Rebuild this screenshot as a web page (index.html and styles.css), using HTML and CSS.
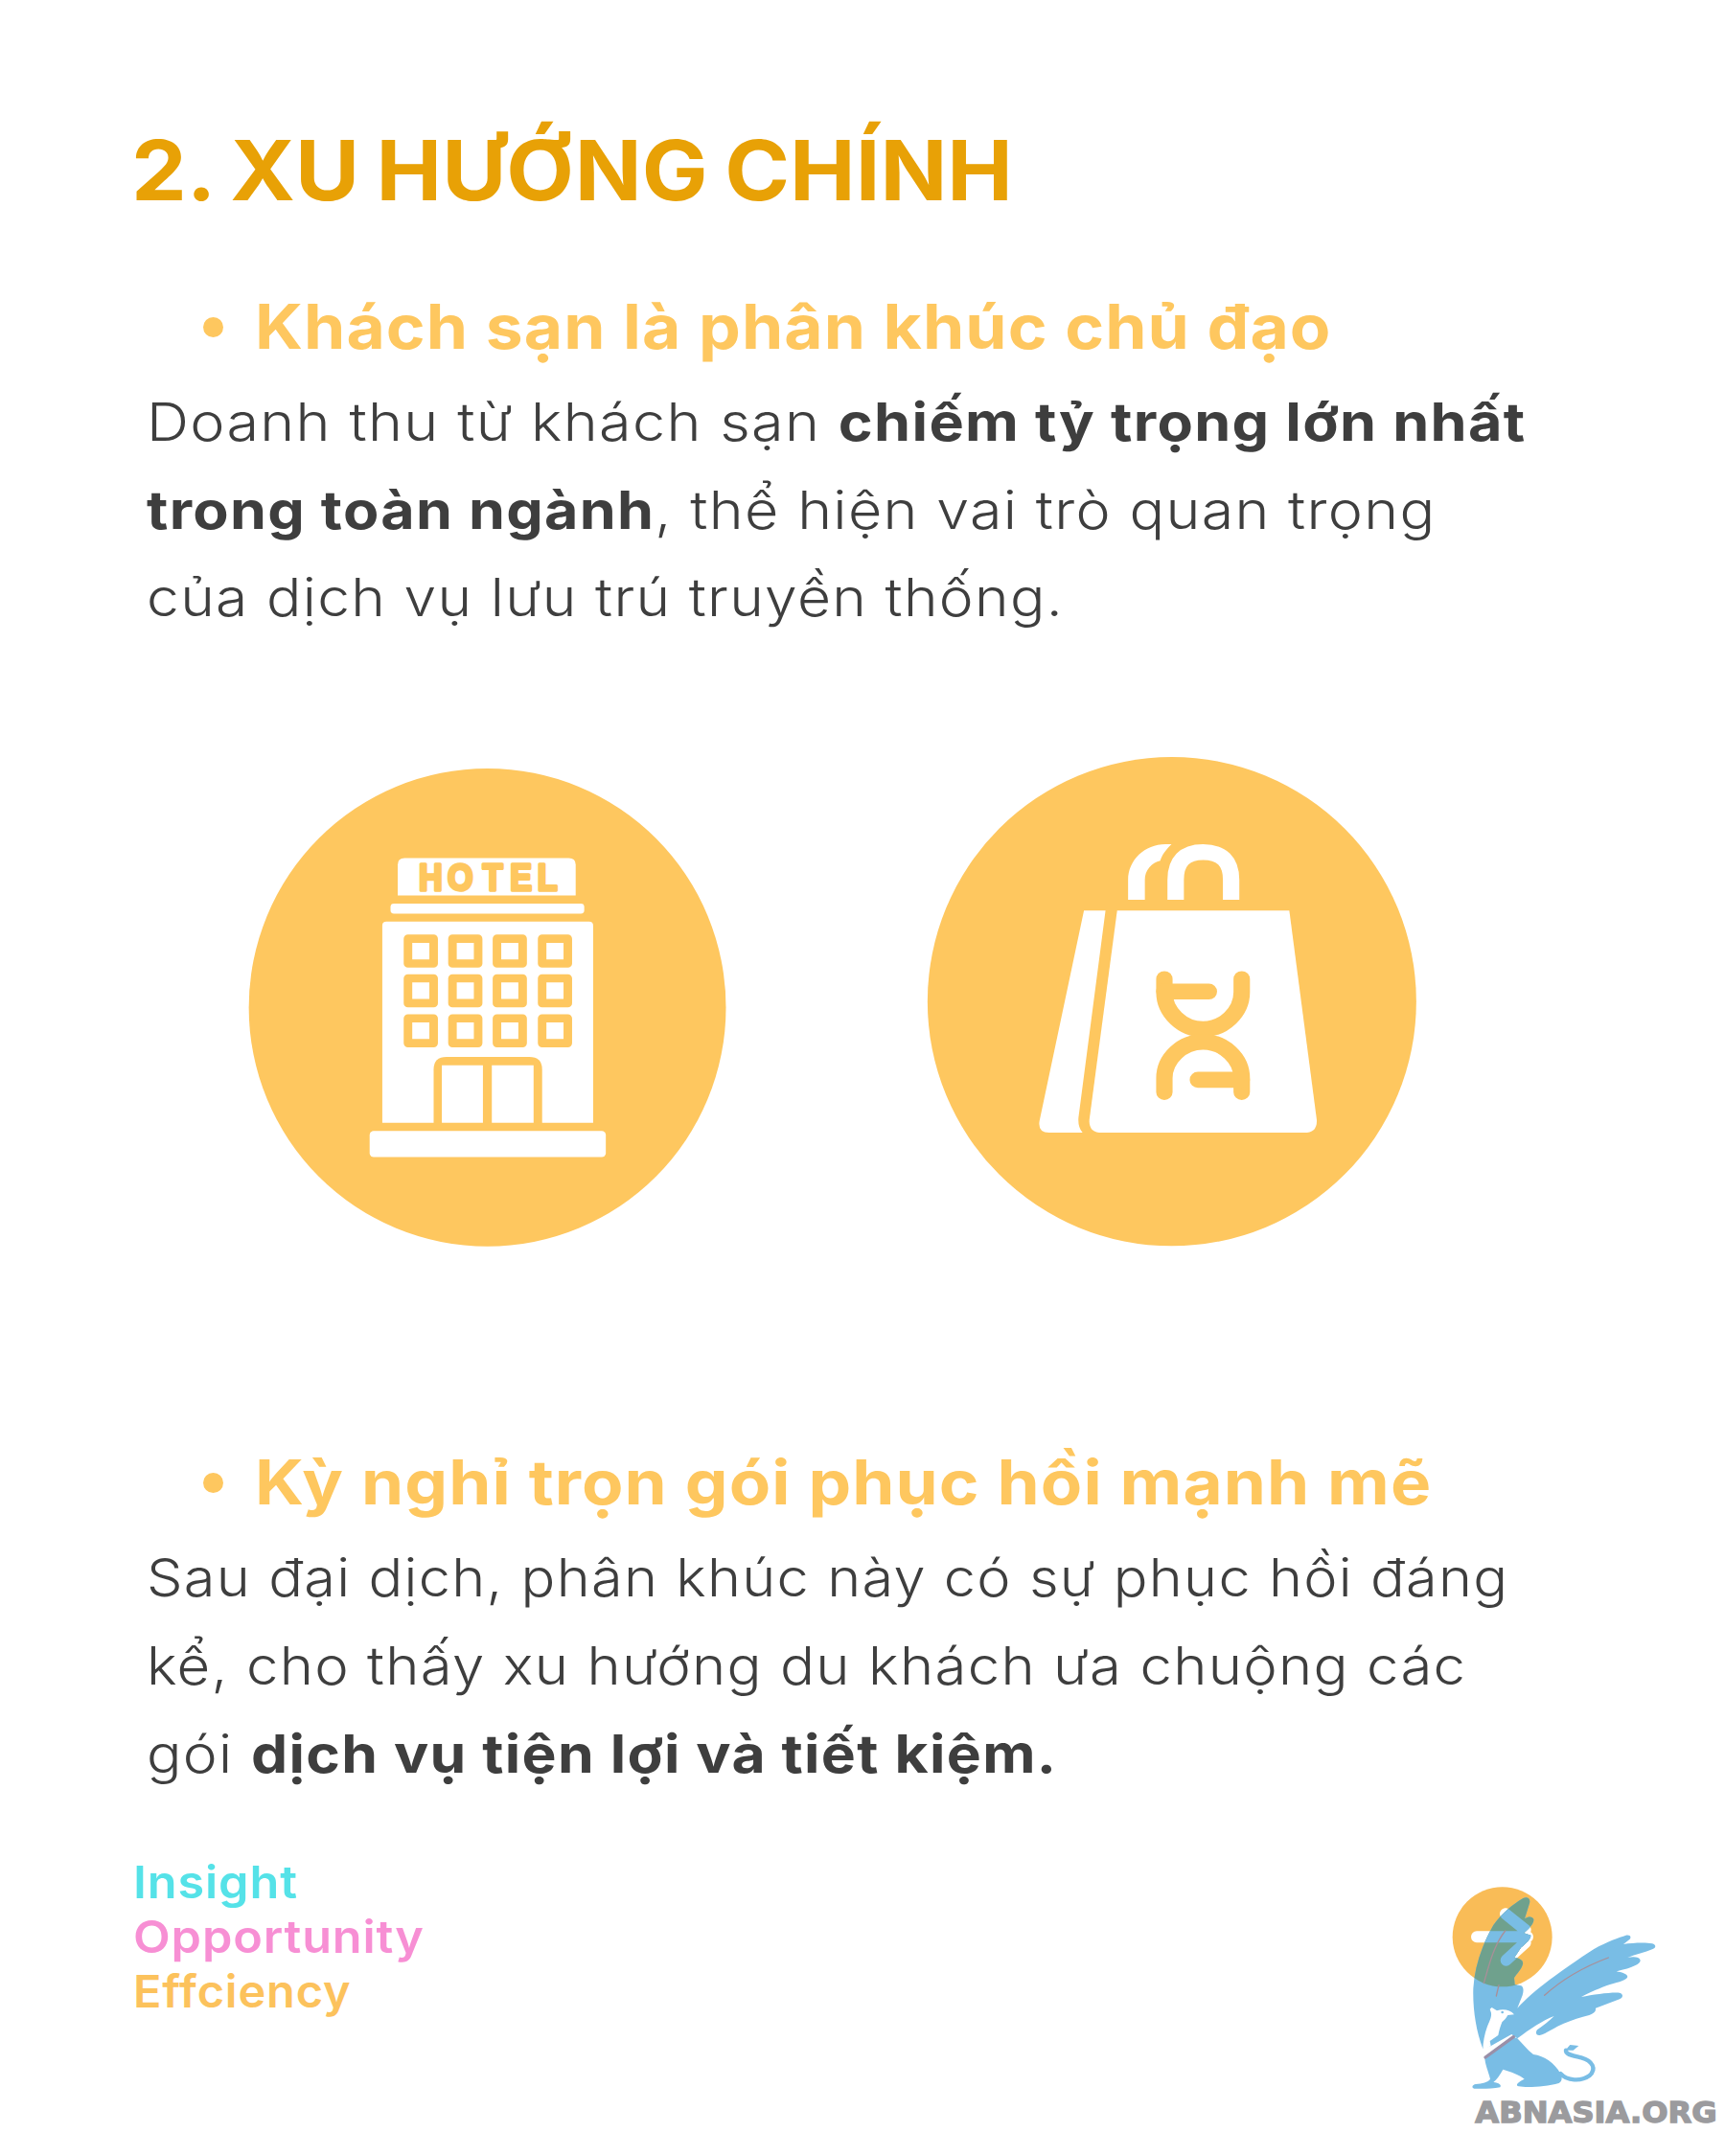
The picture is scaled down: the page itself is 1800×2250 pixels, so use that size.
FILE: index.html
```html
<!DOCTYPE html>
<html lang="vi">
<head>
<meta charset="utf-8">
<title>Xu hướng chính</title>
<link rel="stylesheet" href="styles.css">
</head>
<body>
<main class="page">
  <h1 class="title">2. XU HƯỚNG CHÍNH</h1>

  <h2 class="sub sub-first"><span class="dot"></span><span class="sub-a">Khách sạn là phân khúc chủ đạo</span></h2>
  <p class="body">
    <span class="line ls-a">Doanh thu từ khách sạn <b>chiếm tỷ trọng lớn nhất</b></span>
    <span class="line ls-b"><b>trong toàn ngành</b>, thể hiện vai trò quan trọng</span>
    <span class="line ls-c">của dịch vụ lưu trú truyền thống.</span>
  </p>

  <div class="icons">
    <svg class="icon icon-hotel" width="560" height="540" viewBox="0 0 1568 1566" preserveAspectRatio="none" aria-hidden="true">
      <ellipse class="y" cx="752" cy="787" rx="697" ry="723"/>
      <path class="w" d="M510 335H990Q1010 335 1010 355V448H490V355Q490 335 510 335Z"/>
      <text class="hotel-text" transform="translate(0 433) scale(.84 1)" x="657 757 879 974 1069" y="0">HOTEL</text>
      <rect class="w" x="469" y="473" width="566" height="30" rx="10"/>
      <path class="w" d="M457 527H1049Q1061 527 1061 539V1136H445V539Q445 527 457 527Z"/>
      <g class="win">
        <rect x="520" y="579" width="75" height="75"/><rect x="650" y="579" width="75" height="75"/><rect x="780" y="579" width="75" height="75"/><rect x="912" y="579" width="75" height="75"/>
        <rect x="520" y="699" width="75" height="75"/><rect x="650" y="699" width="75" height="75"/><rect x="780" y="699" width="75" height="75"/><rect x="912" y="699" width="75" height="75"/>
        <rect x="520" y="820" width="75" height="75"/><rect x="650" y="820" width="75" height="75"/><rect x="780" y="820" width="75" height="75"/><rect x="912" y="820" width="75" height="75"/>
      </g>
      <path class="y" d="M595 1140V975Q595 937 633 937H874Q912 937 912 975V1140Z"/>
      <rect class="w" x="619" y="962" width="120" height="174"/>
      <rect class="w" x="765" y="962" width="122" height="174"/>
      <rect class="w" x="408" y="1161" width="690" height="79" rx="12"/>
    </svg>

    <svg class="icon" width="560" height="540" viewBox="0 0 1568 1566" preserveAspectRatio="none" aria-hidden="true">
      <ellipse class="y" cx="764" cy="798" rx="714" ry="740"/>
      <path class="w" d="M604 523H1107L1187 1155Q1190 1195 1150 1195H560Q520 1195 523 1155Z"/>
      <path class="w" d="M507 523H570L491 1150Q489 1178 503 1195H405Q372 1195 377 1160Z"/>
      <path class="handle" d="M775 490V430Q775 346 855 346Q937 346 937 430V490"/>
      <path class="w" d="M636 490V430C636 370 685 322 745 322H763C745 340 735 355 730 372C705 378 685 400 685 430V490Z"/>
      <path class="dna" d="M742 730V770C742 830 795 882 855 882C915 882 968 830 968 770V730"/>
      <path class="dna" d="M742 1072V1030C742 970 795 920 855 920C915 920 968 970 968 1030V1072"/>
      <path class="dna" d="M742 768H872"/>
      <path class="dna" d="M840 1035H968"/>
    </svg>
  </div>

  <h2 class="sub sub-second"><span class="dot"></span><span class="sub-b">Kỳ nghỉ trọn gói phục hồi mạnh mẽ</span></h2>
  <p class="body body-second">
    <span class="line ls-d">Sau đại dịch, phân khúc này có sự phục hồi đáng</span>
    <span class="line ls-e">kể, cho thấy xu hướng du khách ưa chuộng các</span>
    <span class="line ls-f">gói <b>dịch vụ tiện lợi và tiết kiệm.</b></span>
  </p>

  <footer class="footer">
    <div class="tags">
      <div class="tag tag-i">Insight</div>
      <div class="tag tag-o">Opportunity</div>
      <div class="tag tag-e">Effciency</div>
    </div>
    <svg class="logo" width="310" height="300" viewBox="0 0 930 900" role="img" aria-label="ABNASIA.ORG">
      <defs>
        <path id="griffin" d="M172 567C150 510 140 440 142 378C146 312 168 245 205 180C230 145 265 115 298 96C312 90 322 98 318 112L303 160C315 152 328 152 331 162C332 175 316 192 300 205L322 212C322 225 306 238 292 250L270 283C285 283 300 290 297 302C292 320 278 332 270 345L272 366L292 370C300 375 300 386 296 400L280 440C330 385 420 320 520 255C560 232 600 218 620 212C632 210 638 216 632 224L612 240C640 236 680 234 702 238C716 242 714 252 702 256C680 266 650 272 625 282C645 278 662 280 665 290C665 300 650 306 636 312C620 318 600 322 590 325C605 328 624 332 625 342C622 352 600 358 570 366C540 376 505 392 480 405C520 398 570 390 600 392C612 396 612 406 600 412L525 440C526 450 522 456 505 462C480 468 450 478 425 488C400 498 370 520 350 525C338 526 336 516 342 508C360 495 380 480 395 465C360 478 320 505 280 535L262 522L215 548L198 558L172 567Z"/>
        <clipPath id="griffin-clip"><use href="#griffin"/></clipPath>
      </defs>
      <circle class="l-orange" cx="233" cy="217" r="156"/>
      <path class="l-cross-w" d="M153 217H312M243 145L305 195M245 290L305 235"/>
      <use class="l-blue" href="#griffin"/>
      <g clip-path="url(#griffin-clip)">
        <circle class="l-green" cx="233" cy="217" r="156"/>
        <path class="l-cross-b" d="M153 217H312M243 145L305 195M245 290L305 235"/>
      </g>
      <path class="l-blue" d="M178 595L268 530L280 535C295 550 310 570 330 585C365 590 395 610 415 645C420 655 422 668 410 675C370 686 310 690 285 685C272 682 280 672 302 662C285 648 260 640 235 632C225 650 215 665 205 672C222 674 232 680 226 688C200 693 165 693 145 692C136 690 138 680 150 678C170 676 188 672 195 662C190 640 178 615 178 595Z"/>
      <path class="l-tail" d="M415 645C435 668 480 670 505 652C530 630 515 605 480 595C450 588 430 585 432 572"/>
      <path class="l-blue" d="M430 572L445 555L472 558L455 572Z"/>
      <path class="l-neck" d="M194 443L200 438L216 448C235 442 258 445 270 460L250 462C245 472 238 478 232 484C226 498 222 515 220 525L194 543L197 558L172 572C172 545 178 520 185 500C190 485 200 470 198 455Z"/>
      <circle class="l-blue" cx="233" cy="453" r="4"/>
      <path class="l-streak" d="M175 362C190 310 205 245 242 198M214 402L222 368M365 400C420 350 490 310 565 282"/>
      <path class="l-chest" d="M180 594L268 530"/>
      <text class="l-text" x="148" y="799" textLength="757" lengthAdjust="spacingAndGlyphs">ABNASIA.ORG</text>
    </svg>
  </footer>
</main>
</body>
</html>
```

FILE: styles.css
```css
* { box-sizing: border-box; }
html, body { margin: 0; padding: 0; background: #fff; }
.page {
  width: 1800px;
  height: 2250px;
  padding-top: 128px;
  overflow: hidden;
  font-family: Inter, "Open Sans", sans-serif;
}
.title {
  margin: 0 0 0 137px;
  font-size: 87px;
  line-height: 100px;
  font-weight: 700;
  color: #e8a106;
  word-spacing: -4px;
  white-space: nowrap;
  transform: scaleX(1.055);
  transform-origin: left center;
}
.sub {
  display: flex;
  align-items: center;
  margin: 0 0 0 212px;
  font-size: 64px;
  line-height: 90px;
  font-weight: 700;
  color: #fec75f;
  letter-spacing: 1px;
  white-space: nowrap;
}
.sub-a { transform: scaleX(1.086); transform-origin: left center; }
.sub-b { transform: scaleX(1.108); transform-origin: left center; }
.sub-first { margin-top: 68px; }
.sub-second { margin-top: 182px; }
.dot {
  width: 21px;
  height: 21px;
  border-radius: 50%;
  background: #fec75f;
  margin-right: 33px;
  flex: none;
}
.body {
  margin: 9px 0 0 153px;
  font-size: 55px;
  line-height: 91.7px;
  font-weight: 300;
  color: #3e3e3e;
  letter-spacing: 1.2px;
  white-space: nowrap;
}
.body-second { margin-top: 9px; }
.line { display: block; transform-origin: left center; }
.ls-a { transform: scaleX(1.111); }
.ls-b { transform: scaleX(1.108); }
.ls-c { transform: scaleX(1.1); }
.ls-d { transform: scaleX(1.081); }
.ls-e { transform: scaleX(1.088); }
.ls-f { transform: scaleX(1.102); }
.body b { font-weight: 700; }
.icons {
  display: flex;
  align-items: flex-start;
  gap: 150px;
  margin: 100px 0 0 240px;
}
.icon { display: block; flex: none; }
.icon-hotel { margin-top: 10px; }
.y { fill: #fec75f; }
.w { fill: #fff; }
.hotel-text {
  font-family: "Liberation Sans", sans-serif;
  font-weight: 700;
  font-size: 114px;
  fill: #fec75f;
  stroke: #fec75f;
  stroke-width: 10px;
  stroke-linejoin: round;
}
.win rect { fill: #fff; stroke: #fec75f; stroke-width: 25px; stroke-linejoin: round; }
.handle { fill: none; stroke: #fff; stroke-width: 48px; }
.dna { fill: none; stroke: #fec75f; stroke-width: 48px; stroke-linecap: round; }
.footer {
  display: flex;
  justify-content: space-between;
  align-items: flex-start;
  margin-top: 59px;
  padding-left: 139px;
}
.tags { font-size: 47px; line-height: 57px; font-weight: 600; letter-spacing: .8px; white-space: nowrap; }
.tag { transform-origin: left center; }
.tag-i { color: #55e2e8; transform: scaleX(1.072); }
.tag-o { color: #f78fd4; transform: scaleX(1.072); }
.tag-e { color: #fcc25c; transform: scaleX(1.036); }
.logo { display: block; flex: none; margin-top: 14px; }
.l-orange { fill: #f9bc57; }
.l-cross-w { fill: none; stroke: #fff; stroke-width: 36px; stroke-linecap: round; }
.l-cross-b { fill: none; stroke: #79bde5; stroke-width: 36px; stroke-linecap: round; }
.l-blue { fill: #79bde5; }
.l-green { fill: #6fa18d; }
.l-neck { fill: #fff; }
.l-tail { fill: none; stroke: #79bde5; stroke-width: 13px; stroke-linecap: round; }
.l-streak { fill: none; stroke: #a88f98; stroke-width: 4px; stroke-linecap: round; }
.l-chest { fill: none; stroke: #9a8fa8; stroke-width: 10px; stroke-linecap: round; }
.l-text {
  font-family: "DejaVu Sans", sans-serif;
  font-weight: 700;
  font-size: 89px;
  fill: #9b9b9e;
  stroke: #9b9b9e;
  stroke-width: 4px;
}
```
